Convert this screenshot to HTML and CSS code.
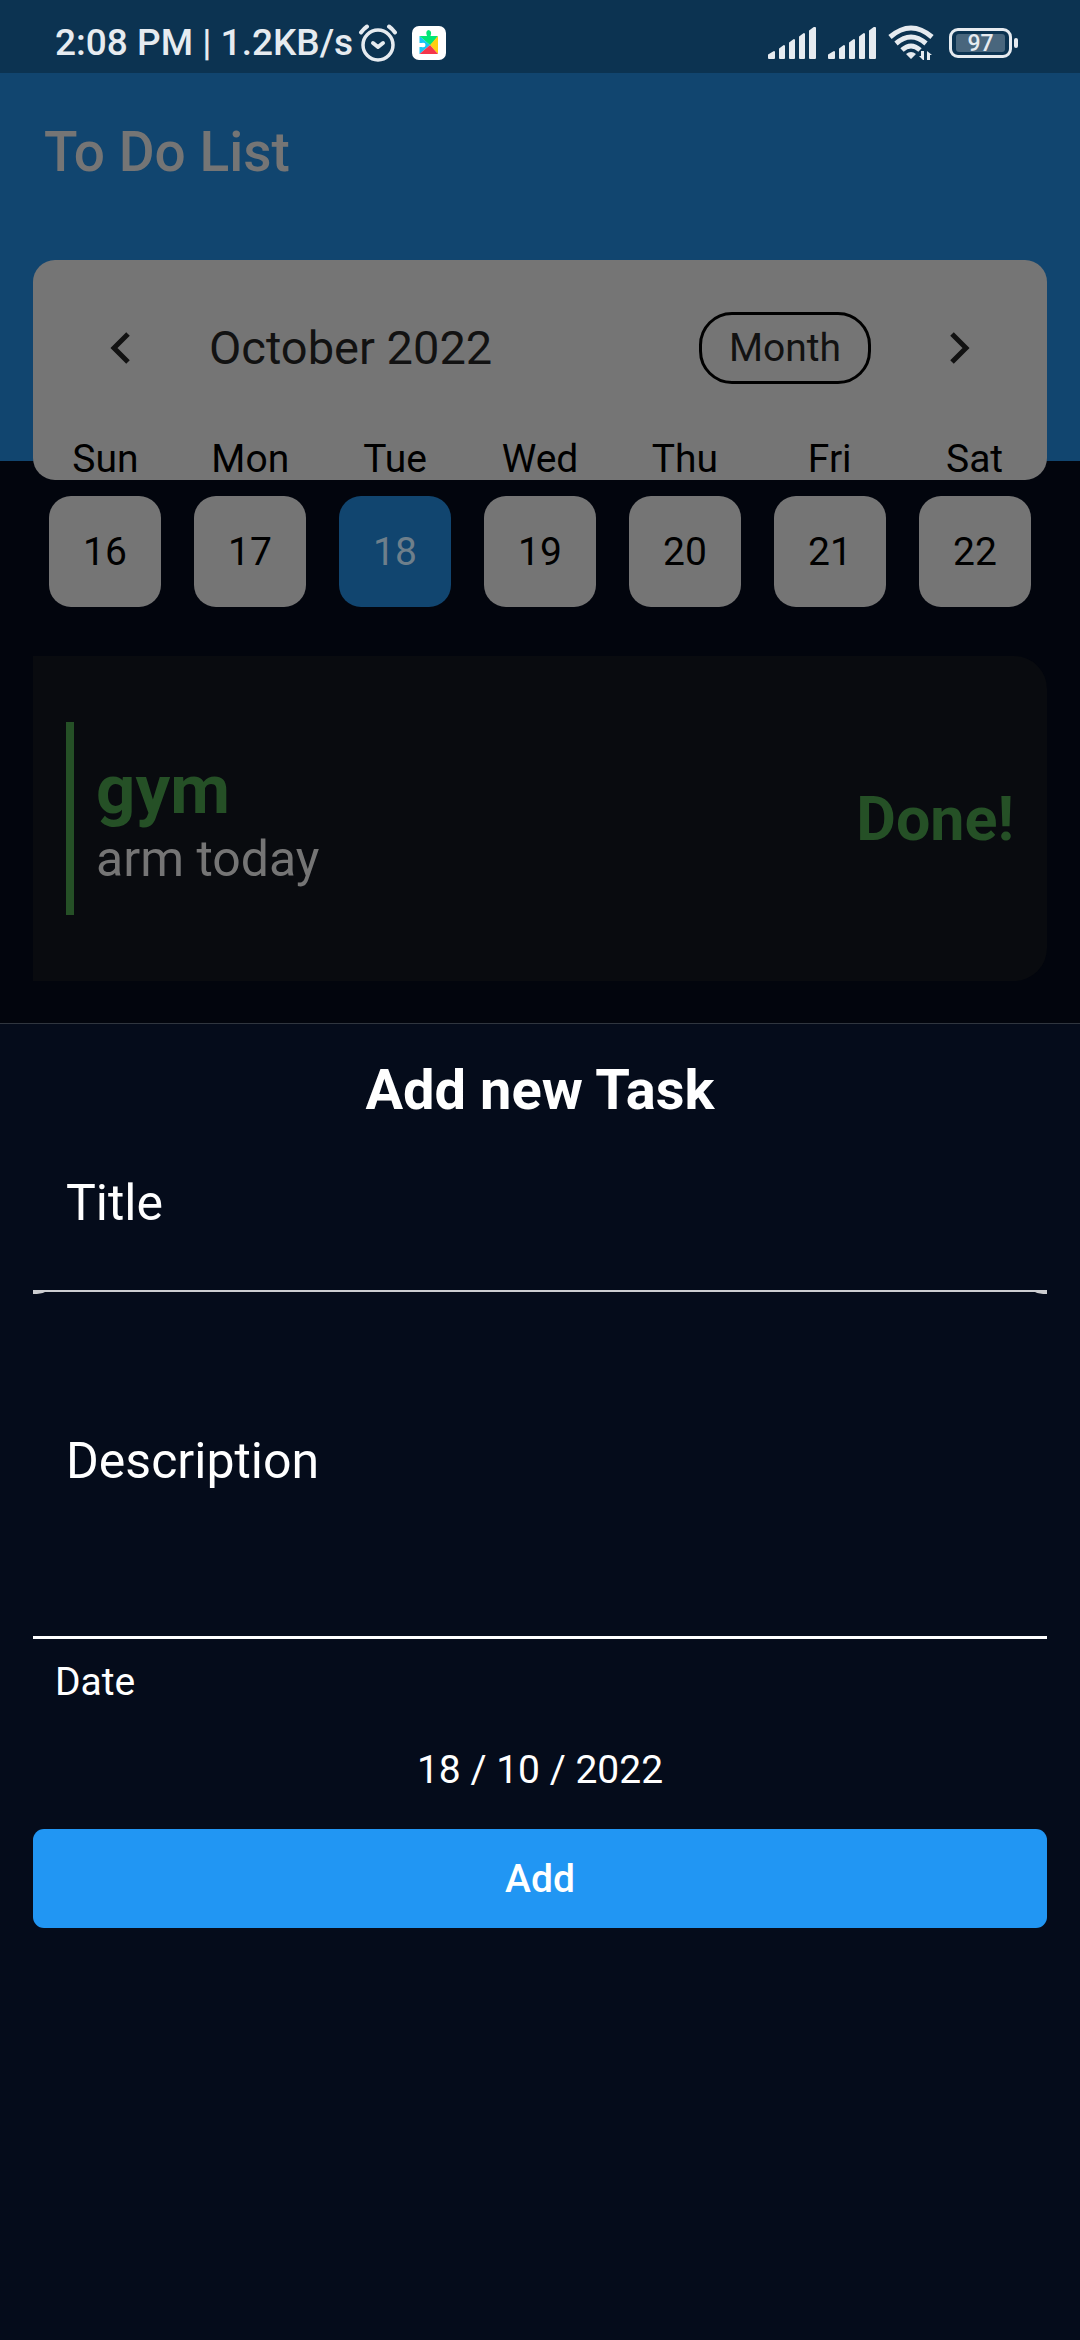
FILE: index.html
```html
<!DOCTYPE html>
<html lang="en">
<head>
<meta charset="utf-8">
<meta name="viewport" content="width=device-width, initial-scale=1">
<title>To Do List</title>
<link rel="stylesheet" href="styles.css">
</head>
<body>
<div class="app">
  <div class="status">
    <div class="status-side">
      <span class="clock">2:08 PM | 1.2KB/s</span>
      <svg class="alarm" viewBox="0 0 40 38" fill="none" stroke="#e6ebf0" stroke-linecap="round" stroke-linejoin="round" aria-hidden="true">
        <circle cx="20" cy="21" r="15" stroke-width="3.500"/>
        <path d="M15 19l5 4 5-4" stroke-width="4"/>
        <path d="M3 8.500q3-4 6-6M37 8.500q-3-4-6-6" stroke-width="4"/>
      </svg>
      <svg class="play" viewBox="0 0 34 34" aria-hidden="true">
        <rect width="34" height="34" rx="7" fill="#fff"/>
        <path d="M7.500 10L18 19 7.500 28z" fill="#16c5f5"/>
        <path d="M7.500 10h7.500q-2-5 1.500-6 4 1 2 6H26l-7.500 9.500z" fill="#00e676"/>
        <path d="M26 10v18l-8-9z" fill="#ffcf10"/>
        <path d="M7.500 28L18 19l8 9z" fill="#f5364b"/>
        <path d="M7 17h2.500q4-1 4 2t-4 2H7z" fill="#fff"/>
      </svg>
    </div>
    <div class="status-side">
      <svg class="signal" viewBox="0 0 48 32" fill="#e6ebf0" stroke="#e6ebf0" stroke-width="2" stroke-linejoin="round" aria-hidden="true">
        <path d="M1 28l5-3v6H1zM12 22l4-3v12h-4zM22 16l4-3v18h-4zM32 10l4-3v24h-4zM42 4l4-3h1v30h-5z"/>
      </svg>
      <svg class="signal" viewBox="0 0 48 32" fill="#e6ebf0" stroke="#e6ebf0" stroke-width="2" stroke-linejoin="round" aria-hidden="true">
        <path d="M1 28l5-3v6H1zM12 22l4-3v12h-4zM22 16l4-3v18h-4zM32 10l4-3v24h-4zM42 4l4-3h1v30h-5z"/>
      </svg>
      <svg class="wifi" viewBox="0 0 46 36" aria-hidden="true">
        <g fill="none" stroke="#e6ebf0" stroke-width="5">
          <path d="M2 12q21-18 42 0M8 18.500q15-13 30 0M14 25q9-8 18 0"/>
        </g>
        <path d="M18 29q5-4 10 0l-5 5zM35 35l-4-4h2v-5h3v9zM39 35v-9l5 4h-2v5z" fill="#e6ebf0"/>
      </svg>
      <span class="battery"><span class="battery-level">97</span></span>
    </div>
  </div>

  <header class="hero">
    <h1 class="app-title">To Do List</h1>
  </header>

  <main class="content">
    <section class="calendar" aria-label="Calendar">
      <div class="cal-head">
        <button class="arrow" type="button" aria-label="Previous week">
          <svg viewBox="0 0 20 32" fill="none" stroke="#121212" stroke-width="5" aria-hidden="true"><path d="M18 2L4 16l14 14"/></svg>
        </button>
        <h2 class="cal-title">October 2022</h2>
        <button class="format" type="button">Month</button>
        <button class="arrow" type="button" aria-label="Next week">
          <svg viewBox="0 0 20 32" fill="none" stroke="#121212" stroke-width="5" aria-hidden="true"><path d="M2 2l14 14L2 30"/></svg>
        </button>
      </div>
      <div class="week names">
        <span>Sun</span><span>Mon</span><span>Tue</span><span>Wed</span><span>Thu</span><span>Fri</span><span>Sat</span>
      </div>
    </section>
    <div class="week days">
      <button class="day" type="button">16</button>
      <button class="day" type="button">17</button>
      <button class="day selected" type="button">18</button>
      <button class="day" type="button">19</button>
      <button class="day" type="button">20</button>
      <button class="day" type="button">21</button>
      <button class="day" type="button">22</button>
    </div>
    <article class="task">
      <span class="task-bar"></span>
      <div class="task-text">
        <h3 class="task-title">gym</h3>
        <p class="task-note">arm today</p>
      </div>
      <span class="task-state">Done!</span>
    </article>
  </main>

  <form class="sheet">
    <h2 class="sheet-title">Add new Task</h2>
    <div class="field">
      <input class="input title-input" type="text" placeholder="Title" aria-label="Title">
      <svg class="rule" viewBox="0 0 1014 4" preserveAspectRatio="none" aria-hidden="true"><path d="M0 0H1014V4Q1006 4 1002 2H12Q8 4 0 4z" fill="#fff" fill-opacity=".8"/></svg>
    </div>
    <textarea class="input note-input" placeholder="Description" aria-label="Description"></textarea>
    <label class="date-label" for="date">Date</label>
    <input class="date-input" id="date" type="text" value="18 / 10 / 2022">
    <button class="add" type="button">Add</button>
  </form>
</div>
</body>
</html>
```
FILE: styles.css
```css
* { box-sizing: border-box; margin: 0; }

body {
  background: #02050d;
  font-family: Roboto, "Noto Sans", sans-serif;
  font-size: 39px;
  line-height: 46px;
}

button, input, textarea {
  font: inherit;
  border: 0;
  padding: 0;
  background: none;
  color: inherit;
}

.app {
  min-height: 100vh;
  display: flex;
  flex-direction: column;
}

.status {
  height: 73px;
  padding: 12px 68px 0 55px;
  display: flex;
  align-items: center;
  justify-content: space-between;
  background: #0c3351;
  color: #e6ebf0;
}

.status-side { display: flex; align-items: center; }
.clock { font-size: 37px; font-weight: 500; }
.alarm { width: 40px; height: 38px; margin-left: 5px; }
.play { width: 34px; height: 34px; margin-left: 14px; }
.signal { width: 48px; height: 32px; margin-right: 12px; }
.wifi { width: 46px; height: 36px; margin-right: 15px; }

.battery {
  position: relative;
  width: 63px;
  height: 30px;
  padding: 3px 4px;
  border: 3px solid #e6ebf0;
  border-radius: 9px;
}

.battery::after {
  content: "";
  position: absolute;
  right: -9px;
  top: 7px;
  width: 4px;
  height: 10px;
  border-radius: 2px;
  background: #e6ebf0;
}

.battery-level {
  display: block;
  height: 18px;
  border-radius: 3px;
  background: #49667d;
  font-size: 23px;
  font-weight: 500;
  line-height: 20px;
  text-align: center;
}

.hero {
  height: 388px;
  padding: 46px 44px;
  background: #11456f;
}

.app-title {
  color: #757575;
  font-size: 55px;
  font-weight: 500;
  line-height: 66px;
}

.content {
  margin-top: -201px;
  padding: 0 33px 42px;
}

.calendar {
  height: 220px;
  border-radius: 22px;
  background: #757575;
  color: #000;
}

.cal-head {
  padding: 52px 77px 0;
  display: flex;
  align-items: center;
  color: #121212;
}

.arrow { width: 20px; height: 32px; }
.arrow svg { display: block; width: 20px; height: 32px; }

.cal-title {
  flex: 1;
  padding-left: 79px;
  font-size: 47px;
  font-weight: 400;
}

.format {
  height: 72px;
  margin-right: 79px;
  padding: 0 27px;
  border: 3px solid #000;
  border-radius: 33px;
}

.week {
  display: grid;
  grid-template-columns: repeat(7, 1fr);
}

.names { padding-top: 52px; text-align: center; }

.days {
  gap: 33px;
  padding: 16px 16px 0;
}

.day {
  height: 111px;
  border-radius: 22px;
  background: #757575;
  color: #000;
}

.selected { background: #11456f; color: #6e7f8b; }

.task {
  margin-top: 49px;
  padding: 66px 33px;
  display: flex;
  align-items: center;
  border-radius: 0 33px 33px 0;
  background: #090b0f;
}

.task-bar { width: 8px; height: 193px; background: #255026; }
.task-text { flex: 1; padding-left: 22px; }

.task-title {
  color: #255026;
  font-size: 69px;
  font-weight: 700;
  line-height: 80px;
}

.task-note { color: #757575; font-size: 50px; line-height: 58px; }
.task-state { color: #255026; font-size: 61px; font-weight: 700; }

.sheet {
  flex: 1;
  padding: 33px;
  border-top: 1px solid #30363f;
  background: #050c1b;
  color: #fff;
  display: flex;
  flex-direction: column;
}

.sheet-title {
  font-size: 56px;
  font-weight: 700;
  line-height: 66px;
  text-align: center;
}

.field { display: flex; flex-direction: column; }

.input {
  width: 100%;
  padding: 0 33px;
  font-size: 50px;
  line-height: 58px;
}

.input::placeholder { color: #fff; opacity: 1; }
.title-input { height: 167px; padding-bottom: 7px; }
.rule { display: block; width: 100%; height: 4px; }

.note-input {
  height: 345px;
  padding-top: 138px;
  border-bottom: 3px solid #fff;
  border-radius: 0;
  resize: none;
}

.date-label { padding: 20px 22px; }

.date-input {
  height: 66px;
  margin: 12px 0 26px;
  text-align: center;
}

.add {
  height: 99px;
  border-radius: 11px;
  background: #2196f3;
  font-weight: 500;
}
```
